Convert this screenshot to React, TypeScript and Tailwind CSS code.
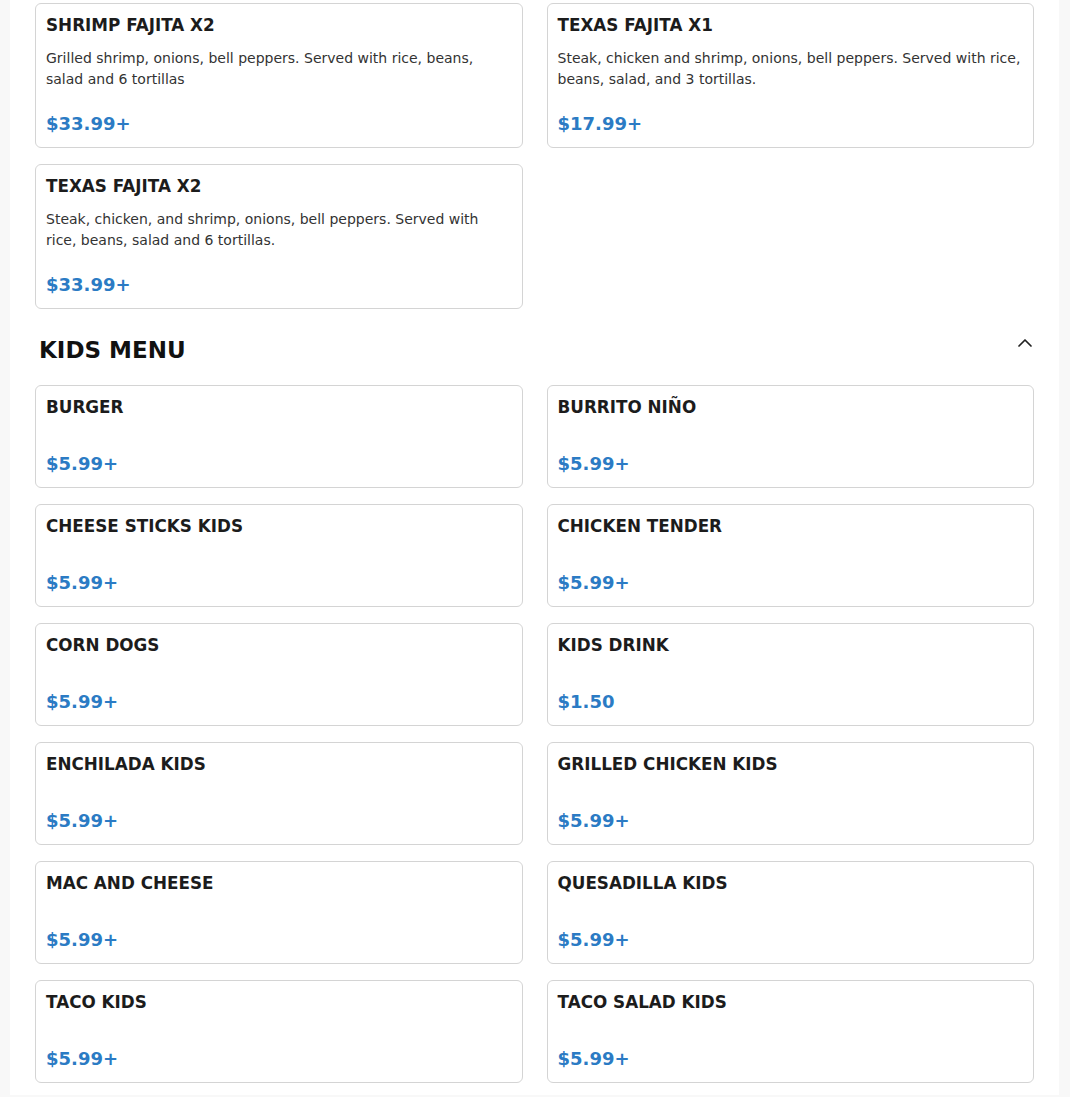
import { ChevronUp } from "lucide-react";

interface Item {
  name: string;
  desc?: string;
  price: string;
}

const fajitas: Item[] = [
  {
    name: "SHRIMP FAJITA X2",
    desc: "Grilled shrimp, onions, bell peppers. Served with rice, beans, salad and 6 tortillas",
    price: "$33.99+",
  },
  {
    name: "TEXAS FAJITA X1",
    desc: "Steak, chicken and shrimp, onions, bell peppers. Served with rice, beans, salad, and 3 tortillas.",
    price: "$17.99+",
  },
  {
    name: "TEXAS FAJITA X2",
    desc: "Steak, chicken, and shrimp, onions, bell peppers. Served with rice, beans, salad and 6 tortillas.",
    price: "$33.99+",
  },
];

const kids: Item[] = [
  { name: "BURGER", price: "$5.99+" },
  { name: "BURRITO NIÑO", price: "$5.99+" },
  { name: "CHEESE STICKS KIDS", price: "$5.99+" },
  { name: "CHICKEN TENDER", price: "$5.99+" },
  { name: "CORN DOGS", price: "$5.99+" },
  { name: "KIDS DRINK", price: "$1.50" },
  { name: "ENCHILADA KIDS", price: "$5.99+" },
  { name: "GRILLED CHICKEN KIDS", price: "$5.99+" },
  { name: "MAC AND CHEESE", price: "$5.99+" },
  { name: "QUESADILLA KIDS", price: "$5.99+" },
  { name: "TACO KIDS", price: "$5.99+" },
  { name: "TACO SALAD KIDS", price: "$5.99+" },
];

function MenuCard({ item }: { item: Item }) {
  return (
    <div className="flex flex-col border border-[#d4d4d4] rounded-[6px] bg-white px-[10px] pt-[11px] pb-[10px]">
      <h3 className="text-[16.8px] leading-[20px] font-bold text-[#1c1c1c]">{item.name}</h3>
      {item.desc && (
        <p className="mt-[13px] text-[14px] leading-[21px] text-[#333333]">{item.desc}</p>
      )}
      <p className={`${item.desc ? "mt-[20px]" : "mt-[33px]"} text-[18px] leading-[27px] font-bold text-[#2b7bc4]`}>
        {item.price}
      </p>
    </div>
  );
}

export default function App() {
  return (
    <div className="min-h-screen bg-[#f8f8f8] px-[10px] font-['DejaVu_Sans',sans-serif]">
      <div className="bg-white w-[1049px] px-[25px] pt-[3px] pb-[12px]">
        <div className="grid grid-cols-2 gap-x-[24px] gap-y-[16px]">
          {fajitas.map((item) => (
            <MenuCard key={item.name} item={item} />
          ))}
        </div>

        <div className="flex items-center justify-between pl-[4px] mt-[25px] mb-[19px]">
          <h2 className="text-[23px] leading-[32px] font-bold text-[#111111]">KIDS MENU</h2>
          <ChevronUp size={24} strokeWidth={1.75} className="text-[#222222] -mt-[14px] -mr-[3px]" />
        </div>

        <div className="grid grid-cols-2 gap-x-[24px] gap-y-[16px]">
          {kids.map((item) => (
            <MenuCard key={item.name} item={item} />
          ))}
        </div>
      </div>
    </div>
  );
}
